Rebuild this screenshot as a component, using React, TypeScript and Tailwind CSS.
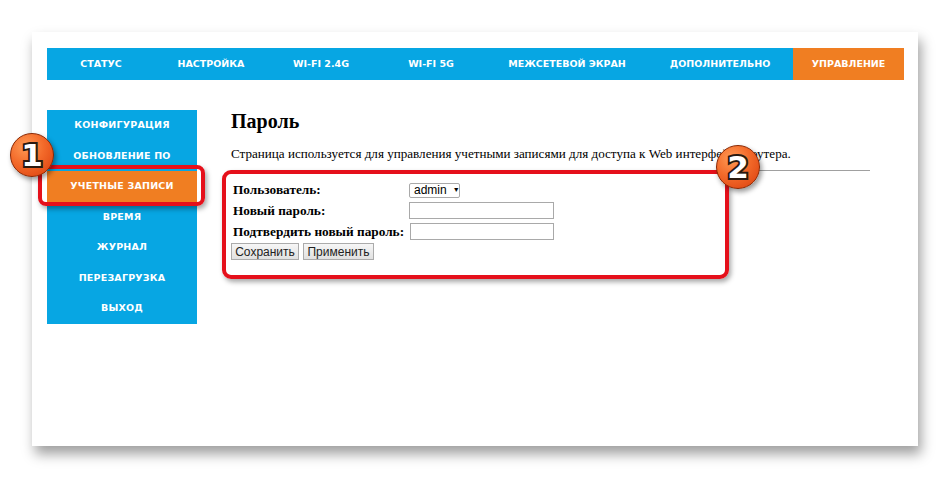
import React from "react";

const navItems: { label: string; w: string; active?: boolean }[] = [
  { label: "СТАТУС", w: "w-[108px]" },
  { label: "НАСТРОЙКА", w: "w-[112px]" },
  { label: "WI-FI 2.4G", w: "w-[108px]" },
  { label: "WI-FI 5G", w: "w-[112px]" },
  { label: "МЕЖСЕТЕВОЙ ЭКРАН", w: "w-[160px]" },
  { label: "ДОПОЛНИТЕЛЬНО", w: "w-[146px]" },
  { label: "УПРАВЛЕНИЕ", w: "w-[111px]", active: true },
];

const sideItems: { label: string; active?: boolean }[] = [
  { label: "КОНФИГУРАЦИЯ" },
  { label: "ОБНОВЛЕНИЕ ПО" },
  { label: "УЧЕТНЫЕ ЗАПИСИ", active: true },
  { label: "ВРЕМЯ" },
  { label: "ЖУРНАЛ" },
  { label: "ПЕРЕЗАГРУЗКА" },
  { label: "ВЫХОД" },
];

function Badge({ n, className }: { n: string; className: string }) {
  return (
    <div
      className={
        "absolute w-[44px] h-[44px] rounded-full border border-[#8a2600] bg-[radial-gradient(circle_at_35%_30%,#ff9a55_0%,#f36a2a_45%,#d93c0c_100%)] shadow-[2px_3px_5px_rgba(0,0,0,0.4)] flex items-center justify-center " +
        className
      }
    >
      <span className="text-[31px] leading-none font-bold text-white [font-family:'DejaVu_Sans',sans-serif] [-webkit-text-stroke:4px_#2a1a10] [paint-order:stroke_fill] mt-[1px]">
        {n}
      </span>
    </div>
  );
}

export default function App() {
  return (
    <div className="relative w-[950px] h-[479px] bg-white overflow-hidden">
      <div className="ml-[32px] mt-[32px] w-[886px] h-[414px] bg-white shadow-[3px_8px_12px_rgba(0,0,0,0.38)] pt-[16px] pl-[15px]">
        {/* Top nav */}
        <div className="flex h-[32px] w-[857px] bg-[#07a6e3] [font-family:'DejaVu_Sans',sans-serif]">
          {navItems.map((it) => (
            <div
              key={it.label}
              className={
                it.w +
                " h-full flex items-center justify-center text-white font-bold text-[9.5px] " +
                (it.active ? "bg-[#f07e22]" : "")
              }
            >
              {it.label}
            </div>
          ))}
        </div>

        <div className="flex mt-[30px]">
          {/* Sidebar */}
          <div className="w-[150px] bg-[#07a6e3] [font-family:'DejaVu_Sans',sans-serif]">
            {sideItems.map((it) => (
              <div
                key={it.label}
                className={
                  "h-[30.5px] flex items-center justify-center text-white font-bold text-[9.5px] tracking-[0.2px] " +
                  (it.active ? "bg-[#f07e22]" : "")
                }
              >
                {it.label}
              </div>
            ))}
          </div>

          {/* Content */}
          <div className="ml-[34px] w-[639px] [font-family:'Liberation_Serif',serif] text-black">
            <h1 className="text-[20px] font-bold leading-[24px] mt-[-1px]">Пароль</h1>
            <p className="text-[13.1px] leading-[16px] mt-[13px]">
              Страница используется для управления учетными записями для доступа к Web интерфейсу роутера.
            </p>
            <div className="h-px bg-[#a0a0a0] mt-[8px]" />
            <div className="mt-[9px] pl-[2px]">
              <div className="flex items-center h-[20px]">
                <span className="w-[176px] text-[13.3px] font-bold">Пользователь:</span>
                <div className="h-[15px] w-[51px] border border-[#a9a9a9] bg-white flex items-center pl-[4px] text-[12px] [font-family:'Liberation_Sans',sans-serif] rounded-[2px]">
                  admin <span className="text-[7px] ml-[6px]">▼</span>
                </div>
              </div>
              <div className="flex items-center h-[21px]">
                <span className="w-[176px] text-[13.3px] font-bold">Новый пароль:</span>
                <div className="h-[17px] w-[145px] border border-[#a9a9a9] bg-white" />
              </div>
              <div className="flex items-center h-[21px]">
                <span className="w-[177px] text-[13.3px] font-bold">Подтвердить новый пароль:</span>
                <div className="h-[17px] w-[144px] border border-[#a9a9a9] bg-white" />
              </div>
            </div>
            <div className="flex gap-[4px] mt-[1px] [font-family:'Liberation_Sans',sans-serif]">
              <div className="h-[17px] w-[68px] border border-[#ababab] bg-[linear-gradient(#f6f6f6,#e1e1e1)] text-[12px] flex items-center justify-center text-[#222]">
                Сохранить
              </div>
              <div className="h-[17px] w-[71px] border border-[#ababab] bg-[linear-gradient(#f6f6f6,#e1e1e1)] text-[12px] flex items-center justify-center text-[#222]">
                Применить
              </div>
            </div>
          </div>
        </div>
      </div>

      {/* Highlight boxes */}
      <div className="absolute left-[38px] top-[165px] w-[167px] h-[41px] border-[4px] border-[#e5101b] rounded-[8px] shadow-[2px_3px_5px_rgba(0,0,0,0.35)]" />
      <div className="absolute left-[222px] top-[170px] w-[507px] h-[109px] border-[4px] border-[#e5101b] rounded-[9px] shadow-[2px_3px_5px_rgba(0,0,0,0.35)]" />

      <Badge n="1" className="left-[10px] top-[133px]" />
      <Badge n="2" className="left-[716px] top-[145px]" />
    </div>
  );
}
